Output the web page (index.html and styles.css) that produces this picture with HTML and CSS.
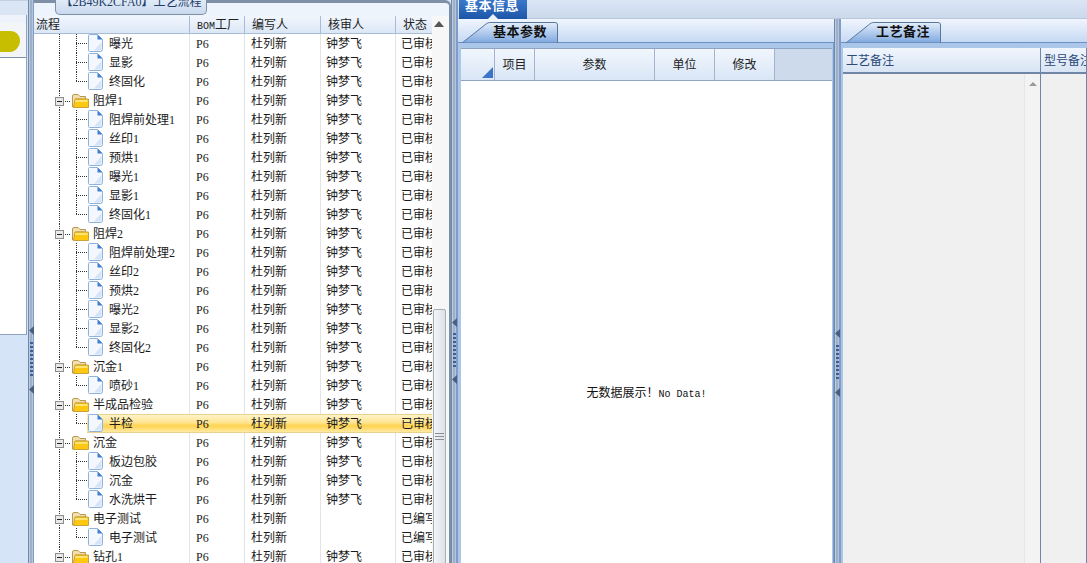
FILE: index.html
```html
<!DOCTYPE html>
<html lang="zh">
<head>
<meta charset="utf-8">
<title>工艺流程</title>
<link rel="stylesheet" href="styles.css">
</head>
<body>
<svg class="defs" width="0" height="0">
  <symbol id="doc" viewBox="0 0 15 18"><path d="M1.500 .5H9.500L14.500 5.500V15.500Q14.500 17.500 12.500 17.500H1.500Q.5 17.500 .5 16.500V1.500Q.5 .5 1.500 .5Z" fill="#f4f8fe" stroke="#8db2dc"/><path d="M9.500 .5V5.500H14.500Z" fill="#3f7fd0"/><path d="M6 16.500H13.500V8Z" fill="#d5e4f7"/></symbol>
  <symbol id="folder" viewBox="0 0 17 14"><path d="M.5 13V2Q.5 .5 2 .5H6L8 2.500H13.500V5H4L3 13Z" fill="#f1dfae" stroke="#b8984f"/><path d="M3 5H16.500V13.500H1.500Z" fill="#fdc80f" stroke="#c9a23c"/><path d="M3.500 6H15.500V8H3Z" fill="#ffe673"/></symbol>
  <symbol id="box" viewBox="0 0 9 9"><rect x=".5" y=".5" width="8" height="8" fill="#e9e9e9" stroke="#8c8c8c"/><path d="M2 4.500H7" stroke="#222"/></symbol>
  <symbol id="arrow" viewBox="0 0 5 9"><path d="M5 0V9L0 4.500Z" fill="#4a5f80"/></symbol>
</svg>

<div class="side">
  <div class="side-top"></div>
  <div class="side-white">
    <div class="blob"></div>
  </div>
</div>

<div class="splitter s1">
  <svg class="sp-arrow"><use href="#arrow"/></svg><div class="sp-dots d1"></div><svg class="sp-arrow"><use href="#arrow"/></svg>
</div>

<section class="win">
  <div class="win-title">【2B49K2CFA0】工艺流程</div>
  <div class="win-inner">
    <div class="grid">
      <div class="row head"><div class="c t">流程</div><div class="c b"><span class="mono">BOM</span>工厂</div><div class="c w">编写人</div><div class="c h">核审人</div><div class="c s">状态</div></div>
      <div class="row"><div class="c t"><span class="g1"></span><span class="g2"></span><svg class="doc"><use href="#doc"/></svg><span>曝光</span></div><div class="c b">P6</div><div class="c w">杜列新</div><div class="c h">钟梦飞</div><div class="c s">已审核</div></div>
      <div class="row"><div class="c t"><span class="g1"></span><span class="g2"></span><svg class="doc"><use href="#doc"/></svg><span>显影</span></div><div class="c b">P6</div><div class="c w">杜列新</div><div class="c h">钟梦飞</div><div class="c s">已审核</div></div>
      <div class="row"><div class="c t"><span class="g1"></span><span class="g2 last"></span><svg class="doc"><use href="#doc"/></svg><span>终固化</span></div><div class="c b">P6</div><div class="c w">杜列新</div><div class="c h">钟梦飞</div><div class="c s">已审核</div></div>
      <div class="row"><div class="c t f"><svg class="box"><use href="#box"/></svg><span class="dash"></span><svg class="folder"><use href="#folder"/></svg><span>阻焊1</span></div><div class="c b">P6</div><div class="c w">杜列新</div><div class="c h">钟梦飞</div><div class="c s">已审核</div></div>
      <div class="row"><div class="c t"><span class="g1"></span><span class="g2"></span><svg class="doc"><use href="#doc"/></svg><span>阻焊前处理1</span></div><div class="c b">P6</div><div class="c w">杜列新</div><div class="c h">钟梦飞</div><div class="c s">已审核</div></div>
      <div class="row"><div class="c t"><span class="g1"></span><span class="g2"></span><svg class="doc"><use href="#doc"/></svg><span>丝印1</span></div><div class="c b">P6</div><div class="c w">杜列新</div><div class="c h">钟梦飞</div><div class="c s">已审核</div></div>
      <div class="row"><div class="c t"><span class="g1"></span><span class="g2"></span><svg class="doc"><use href="#doc"/></svg><span>预烘1</span></div><div class="c b">P6</div><div class="c w">杜列新</div><div class="c h">钟梦飞</div><div class="c s">已审核</div></div>
      <div class="row"><div class="c t"><span class="g1"></span><span class="g2"></span><svg class="doc"><use href="#doc"/></svg><span>曝光1</span></div><div class="c b">P6</div><div class="c w">杜列新</div><div class="c h">钟梦飞</div><div class="c s">已审核</div></div>
      <div class="row"><div class="c t"><span class="g1"></span><span class="g2"></span><svg class="doc"><use href="#doc"/></svg><span>显影1</span></div><div class="c b">P6</div><div class="c w">杜列新</div><div class="c h">钟梦飞</div><div class="c s">已审核</div></div>
      <div class="row"><div class="c t"><span class="g1"></span><span class="g2 last"></span><svg class="doc"><use href="#doc"/></svg><span>终固化1</span></div><div class="c b">P6</div><div class="c w">杜列新</div><div class="c h">钟梦飞</div><div class="c s">已审核</div></div>
      <div class="row"><div class="c t f"><svg class="box"><use href="#box"/></svg><span class="dash"></span><svg class="folder"><use href="#folder"/></svg><span>阻焊2</span></div><div class="c b">P6</div><div class="c w">杜列新</div><div class="c h">钟梦飞</div><div class="c s">已审核</div></div>
      <div class="row"><div class="c t"><span class="g1"></span><span class="g2"></span><svg class="doc"><use href="#doc"/></svg><span>阻焊前处理2</span></div><div class="c b">P6</div><div class="c w">杜列新</div><div class="c h">钟梦飞</div><div class="c s">已审核</div></div>
      <div class="row"><div class="c t"><span class="g1"></span><span class="g2"></span><svg class="doc"><use href="#doc"/></svg><span>丝印2</span></div><div class="c b">P6</div><div class="c w">杜列新</div><div class="c h">钟梦飞</div><div class="c s">已审核</div></div>
      <div class="row"><div class="c t"><span class="g1"></span><span class="g2"></span><svg class="doc"><use href="#doc"/></svg><span>预烘2</span></div><div class="c b">P6</div><div class="c w">杜列新</div><div class="c h">钟梦飞</div><div class="c s">已审核</div></div>
      <div class="row"><div class="c t"><span class="g1"></span><span class="g2"></span><svg class="doc"><use href="#doc"/></svg><span>曝光2</span></div><div class="c b">P6</div><div class="c w">杜列新</div><div class="c h">钟梦飞</div><div class="c s">已审核</div></div>
      <div class="row"><div class="c t"><span class="g1"></span><span class="g2"></span><svg class="doc"><use href="#doc"/></svg><span>显影2</span></div><div class="c b">P6</div><div class="c w">杜列新</div><div class="c h">钟梦飞</div><div class="c s">已审核</div></div>
      <div class="row"><div class="c t"><span class="g1"></span><span class="g2 last"></span><svg class="doc"><use href="#doc"/></svg><span>终固化2</span></div><div class="c b">P6</div><div class="c w">杜列新</div><div class="c h">钟梦飞</div><div class="c s">已审核</div></div>
      <div class="row"><div class="c t f"><svg class="box"><use href="#box"/></svg><span class="dash"></span><svg class="folder"><use href="#folder"/></svg><span>沉金1</span></div><div class="c b">P6</div><div class="c w">杜列新</div><div class="c h">钟梦飞</div><div class="c s">已审核</div></div>
      <div class="row"><div class="c t"><span class="g1"></span><span class="g2 last"></span><svg class="doc"><use href="#doc"/></svg><span>喷砂1</span></div><div class="c b">P6</div><div class="c w">杜列新</div><div class="c h">钟梦飞</div><div class="c s">已审核</div></div>
      <div class="row"><div class="c t f"><svg class="box"><use href="#box"/></svg><span class="dash"></span><svg class="folder"><use href="#folder"/></svg><span>半成品检验</span></div><div class="c b">P6</div><div class="c w">杜列新</div><div class="c h">钟梦飞</div><div class="c s">已审核</div></div>
      <div class="row sel"><div class="c t"><span class="g1"></span><span class="g2 last"></span><svg class="doc"><use href="#doc"/></svg><span>半检</span></div><div class="c b">P6</div><div class="c w">杜列新</div><div class="c h">钟梦飞</div><div class="c s">已审核</div></div>
      <div class="row"><div class="c t f"><svg class="box"><use href="#box"/></svg><span class="dash"></span><svg class="folder"><use href="#folder"/></svg><span>沉金</span></div><div class="c b">P6</div><div class="c w">杜列新</div><div class="c h">钟梦飞</div><div class="c s">已审核</div></div>
      <div class="row"><div class="c t"><span class="g1"></span><span class="g2"></span><svg class="doc"><use href="#doc"/></svg><span>板边包胶</span></div><div class="c b">P6</div><div class="c w">杜列新</div><div class="c h">钟梦飞</div><div class="c s">已审核</div></div>
      <div class="row"><div class="c t"><span class="g1"></span><span class="g2"></span><svg class="doc"><use href="#doc"/></svg><span>沉金</span></div><div class="c b">P6</div><div class="c w">杜列新</div><div class="c h">钟梦飞</div><div class="c s">已审核</div></div>
      <div class="row"><div class="c t"><span class="g1"></span><span class="g2 last"></span><svg class="doc"><use href="#doc"/></svg><span>水洗烘干</span></div><div class="c b">P6</div><div class="c w">杜列新</div><div class="c h">钟梦飞</div><div class="c s">已审核</div></div>
      <div class="row"><div class="c t f"><svg class="box"><use href="#box"/></svg><span class="dash"></span><svg class="folder"><use href="#folder"/></svg><span>电子测试</span></div><div class="c b">P6</div><div class="c w">杜列新</div><div class="c h"></div><div class="c s">已编写</div></div>
      <div class="row"><div class="c t"><span class="g1"></span><span class="g2 last"></span><svg class="doc"><use href="#doc"/></svg><span>电子测试</span></div><div class="c b">P6</div><div class="c w">杜列新</div><div class="c h"></div><div class="c s">已编写</div></div>
      <div class="row"><div class="c t f"><svg class="box"><use href="#box"/></svg><span class="dash"></span><svg class="folder"><use href="#folder"/></svg><span>钻孔1</span></div><div class="c b">P6</div><div class="c w">杜列新</div><div class="c h">钟梦飞</div><div class="c s">已审核</div></div>
    </div>
    <div class="vbar">
      <div class="up"></div>
      <div class="thumb"><span class="grip"></span></div>
    </div>
  </div>
</section>

<div class="splitter s2">
  <svg class="sp-arrow"><use href="#arrow"/></svg><div class="sp-dots d2"></div><svg class="sp-arrow"><use href="#arrow"/></svg>
</div>

<main class="main">
  <div class="topbar"><div class="toptab">基本信息</div></div>
  <div class="panels">
    <section class="panel p-mid">
      <div class="tabstrip">
        <div class="tab t-mid">
          <svg class="tabshape" viewBox="0 0 100 21" preserveAspectRatio="none"><defs><linearGradient id="tg" x1="0" y1="0" x2="0" y2="1"><stop offset="0" stop-color="#e4edfa"/><stop offset="1" stop-color="#7ea8df"/></linearGradient></defs><path d="M0 21L25 2Q27 .5 29 .5H97Q99.500 .5 99.500 3V21Z" fill="url(#tg)" stroke="#58789f" vector-effect="non-scaling-stroke"/></svg>
          <span class="tabtext">基本参数</span>
        </div>
      </div>
      <div class="panel-body">
        <div class="ghead">
          <div class="gc corner"><i class="tri"></i></div>
          <div class="gc g-a">项目</div>
          <div class="gc g-b">参数</div>
          <div class="gc g-c">单位</div>
          <div class="gc g-c">修改</div>
          <div class="gc g-rest"></div>
        </div>
        <div class="gbody">无数据展示！<span class="mono">No Data!</span></div>
      </div>
    </section>

    <div class="splitter s3">
      <svg class="sp-arrow"><use href="#arrow"/></svg><div class="sp-dots d3"></div><svg class="sp-arrow"><use href="#arrow"/></svg>
    </div>

    <section class="panel p-right">
      <div class="tabstrip">
        <div class="tab t-right">
          <svg class="tabshape" viewBox="0 0 100 21" preserveAspectRatio="none"><path d="M0 21L25 2Q27 .5 29 .5H97Q99.500 .5 99.500 3V21Z" fill="url(#tg)" stroke="#58789f" vector-effect="non-scaling-stroke"/></svg>
          <span class="tabtext">工艺备注</span>
        </div>
      </div>
      <div class="panel-body right-body">
        <div class="note note-a">
          <div class="nh">工艺备注</div>
          <div class="nb"><div class="nbar"><i class="nup"></i></div></div>
        </div>
        <div class="note note-b">
          <div class="nh">型号备注</div>
          <div class="nb"></div>
        </div>
      </div>
    </section>
  </div>
</main>
</body>
</html>
```
FILE: styles.css
```css
* { box-sizing: border-box; }
html, body { margin: 0; height: 563px; overflow: hidden; }
body {
  display: flex;
  width: 1087px;
  background: #d6e4f7;
  font: 12px/19px "Liberation Serif", "Noto Sans CJK SC", serif;
  color: #1a1a1a;
}
.defs { display: block; flex: none; }
.mono { font-family: "Liberation Mono", monospace; font-size: 10px; }

.side { flex: none; width: 28px; height: 335px; display: flex; flex-direction: column; }
.side-top { height: 15px; background: #dbe6f5; border-top: 1px solid #c3d0e1; }
.side-white { flex: 1; background: linear-gradient(#eef3fb 0 8px, #f4f5f7 8px 42px, #7f93ad 42px 43px, #fff 43px); border-right: 1px solid #8ea3bd; border-bottom: 1px solid #8ea3bd; margin-right: 1px; padding-top: 16px; }
.blob { width: 20px; height: 21px; border-radius: 0 50% 60% 0; background: #c8be00; }

.splitter { flex: none; height: 563px; display: flex; flex-direction: column; align-items: center; background: linear-gradient(90deg, #6f89ad 0 1px, #b9cce6 1px 2px, #9fb0c6 2px 4px, #b9c5d5 4px 5px, #7f9ccb 5px 6px); }
.s1 { width: 6px; padding-top: 326px; }
.s2 { width: 7px; padding-top: 318px; }
.s3 { width: 7px; padding-top: 310px; height: 544px; }
.sp-arrow { display: block; width: 5px; height: 9px; flex: none; }
.sp-dots { width: 3px; flex: none; background: repeating-linear-gradient(#3f5f95 0 2px, transparent 2px 4px); }
.d1 { height: 34px; margin: 7px 0 9px; }
.d2 { height: 34px; margin: 6px 0 8px; }
.d3 { height: 36px; margin: 7px 0 7px; }

.win { flex: none; width: 417px; position: relative; background: #eef4fc; border-top: 3px solid #7e8fa6; border-right: 2px solid #7e8fa6; border-top-right-radius: 6px; padding-top: 13px; }
.win-title { position: absolute; left: 21px; top: -3px; width: 152px; height: 15px; background: linear-gradient(#e1ebf8, #c9d9ee); border: 1px solid #7e8fa6; border-top: 0; border-radius: 0 0 5px 5px; text-align: center; line-height: 5px; font-size: 12px; color: #1f3f6a; white-space: nowrap; overflow: hidden; }
.win-inner { display: flex; height: 548px; background: #fff; }
.grid { width: 398px; flex: none; overflow: hidden; }
.row { display: grid; grid-template-columns: 156px 55px 76px 75px 36px; height: 19px; background: #fff; }
.c { overflow: hidden; white-space: nowrap; height: 19px; border-right: 1px solid #e1e4e8; }
.c.b { padding: 1px 0 0 6px; }
.c.w { padding: 1px 0 0 6px; }
.c.h { padding: 1px 0 0 5px; }
.c.s { padding: 1px 0 0 5px; border-right: 0; }
.c.t { display: flex; align-items: flex-start; padding-left: 25px; background: repeating-linear-gradient(#333 0 1px, transparent 1px 2px) 25px 0 / 1px 100% no-repeat; }
.c.t.f { padding-left: 21px; }
.c.t > span:last-child { margin-top: 1px; }
.g1 { flex: none; width: 17px; height: 19px; }
.g2 { flex: none; width: 12px; height: 19px; background:
  repeating-linear-gradient(#333 0 1px, transparent 1px 2px) 0 0 / 1px 100% no-repeat,
  repeating-linear-gradient(90deg, #333 0 1px, transparent 1px 2px) 0 9px / 100% 1px no-repeat; }
.g2.last { background:
  repeating-linear-gradient(#333 0 1px, transparent 1px 2px) 0 0 / 1px 10px no-repeat,
  repeating-linear-gradient(90deg, #333 0 1px, transparent 1px 2px) 0 9px / 100% 1px no-repeat; }
.doc { flex: none; display: block; width: 15px; height: 18px; margin: 0 6px 0 0; }
.box { flex: none; display: block; width: 9px; height: 9px; margin-top: 6px; }
.dash { flex: none; width: 8px; height: 19px; background: repeating-linear-gradient(90deg, #333 0 1px, transparent 1px 2px) 1px 10px / 6px 1px no-repeat; }
.folder { flex: none; display: block; width: 17px; height: 14px; margin: 3px 4px 0 0; }

.head { height: 18px; background: linear-gradient(#f1f6fd, #dae6f6); box-shadow: inset 0 -1px #a9bcd6; }
.head .c { background: none; border-right: 1px solid #a9bcd6; height: 18px; line-height: 17px; color: #222; padding-top: 1px; }
.head .c.t { padding-left: 2px; display: block; }
.head .c.b { padding-left: 7px; }
.head .c.w { padding-left: 7px; }
.head .c.h { padding-left: 7px; }
.head .c.s { padding-left: 7px; border-right: 0; }

.sel { background:
  linear-gradient(#e8d28e 0 1px, transparent 1px calc(100% - 1px), #e8d28e calc(100% - 1px)) 53px 0 / 100% 100% no-repeat,
  linear-gradient(#fff5d0, #ffe591 45%, #ffd24f 62%, #ffeeb0) 53px 0 / 100% 100% no-repeat; }
.sel .c { border-right-color: transparent; }

.vbar { flex: 1; display: flex; flex-direction: column; background: #f7f7f7; }
.up { flex: none; height: 293px; position: relative; }
.up::before { content: ""; position: absolute; left: 2px; top: 5px; border: 5px solid transparent; border-top: 0; border-bottom: 6px solid #555; }
.thumb { flex: 1; margin: 0 3px 0 1px; background: linear-gradient(90deg, #f3f5f8, #dde1e8); border: 1px solid #a8aeb6; border-radius: 2px 2px 0 0; display: flex; justify-content: center; padding-top: 123px; }
.grip { width: 9px; height: 7px; background: repeating-linear-gradient(#8a8f96 0 1px, transparent 1px 3px); }

.main { flex: 1; min-width: 0; display: flex; flex-direction: column; }
.topbar { flex: none; height: 19px; background: linear-gradient(#dbe6f5, #cbd9ed); border-bottom: 1px solid #b9c7d9; padding-left: 1px; }
.toptab { position: relative; width: 68px; height: 19px; padding-right: 2px; background: linear-gradient(#3b78cb, #1d56a9); color: #fff; font-weight: bold; font-size: 13px; letter-spacing: .5px; line-height: 9px; text-align: center; overflow: hidden; font-family: "Noto Sans CJK SC", sans-serif; }
.toptab::after { content: ""; position: absolute; left: 29px; bottom: 0; border: 5px solid transparent; border-top: 0; border-bottom: 5px solid #eaf2fb; }

.panels { flex: 1; display: flex; min-height: 0; }
.panel { display: flex; flex-direction: column; }
.p-mid { flex: none; width: 376px; }
.p-right { flex: 1; min-width: 0; }
.tabstrip { flex: none; height: 24px; padding-top: 3px; background: linear-gradient(#f0f5fd, #c6d9f3); border-bottom: 1px solid #6d91c2; }
.t-mid { margin-left: 4px; width: 96px; }
.t-right { margin-left: 5px; width: 95px; }
.tab { display: grid; height: 21px; }
.tabshape { grid-area: 1 / 1; width: 100%; height: 21px; display: block; }
.tabtext { grid-area: 1 / 1; align-self: start; text-align: right; padding-right: 11px; font-family: "Noto Sans CJK SC", sans-serif; font-weight: bold; font-size: 13px; letter-spacing: .5px; line-height: 18px; color: #111; }
.panel-body { flex: 1; min-height: 0; display: flex; flex-direction: column; background: #aac7ea; padding: 5px 1px 0 3px; border-right: 1px solid #7d9ecb; }
.ghead { flex: none; display: flex; height: 33px; background: linear-gradient(#f1f6fd, #dae6f6); border-bottom: 1px solid #8ea4c2; border-top: 1px solid #8ea4c2; }
.gc { flex: none; height: 31px; text-align: center; line-height: 31px; padding-top: 1px; border-right: 1px solid #a3b4cb; color: #222; }
.corner { width: 34px; position: relative; }
.tri { position: absolute; right: 1px; bottom: 2px; border-style: solid; border-width: 0 0 11px 11px; border-color: transparent transparent #3c74c8 transparent; }
.g-a { width: 40px; }
.g-b { width: 120px; }
.g-c { width: 60px; }
.g-rest { flex: 1; background: #cddaeb; border-right: 0; }
.gbody { flex: 1; background: #fff; text-align: center; padding-top: 303px; color: #111; }

.right-body { flex-direction: row; padding: 5px 0 0 2px; border-right: 0; }
.note { display: flex; flex-direction: column; }
.note-a { flex: none; width: 198px; }
.note-b { flex: 1; min-width: 0; }
.nh { flex: none; height: 26px; padding: 1px 0 0 3px; line-height: 24px; white-space: nowrap; overflow: hidden; color: #2b4a78; background: linear-gradient(#f1f6fd, #d8e4f4); border-bottom: 2px solid #6f86a6; border-right: 1px solid #6f86a6; }
.nb { flex: 1; background: #f0f0f0; display: flex; justify-content: flex-end; border-right: 1px solid #6f86a6; }
.nbar { width: 16px; height: 100%; background: #f3f3f3; border-left: 1px solid #e6e6e6; position: relative; }
.nup { position: absolute; left: 4px; top: 8px; border: 4px solid transparent; border-top: 0; border-bottom: 4px solid #9a9a9a; }
```
